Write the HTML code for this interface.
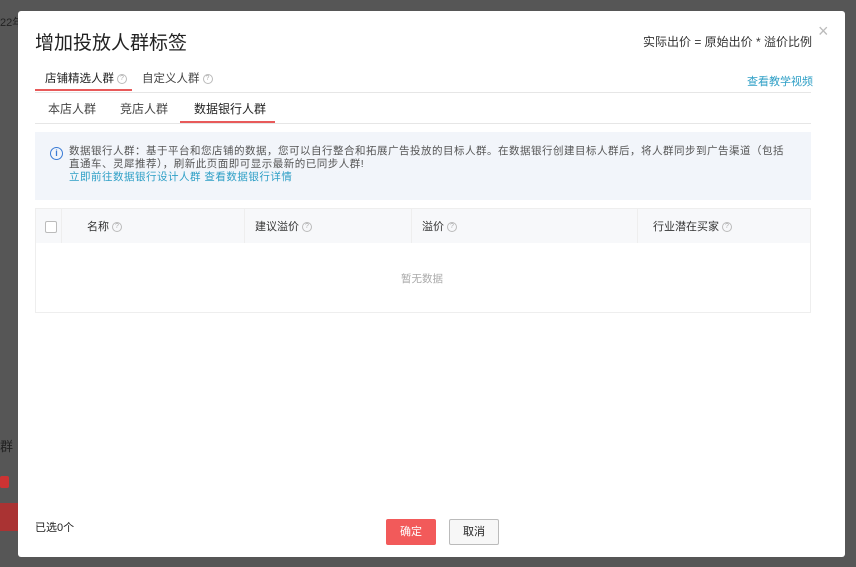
<!DOCTYPE html>
<html><head><meta charset="utf-8"><style>
*{box-sizing:border-box;margin:0;padding:0}
body{width:856px;height:567px;overflow:hidden;background:#565656;font-family:"Liberation Sans","Noto Sans CJK SC",sans-serif;font-size:12px;color:#333;position:relative}
.m{position:absolute;left:18px;top:11px;width:827px;height:546px;background:#fff;border-radius:3px}
.a{position:absolute;white-space:nowrap}
.q{display:inline-block;width:10px;height:10px;border:1px solid #bbb;border-radius:50%;font-size:7px;line-height:8px;text-align:center;color:#aaa;vertical-align:middle;margin-left:3px}
.link{color:#2e9fc6}
</style></head><body>
<div class="a" style="left:0;top:14px;color:#222;font-size:11px">22年</div>
<div class="a" style="left:0;top:436px;color:#222;font-size:13px">群</div>
<div class="a" style="left:0;top:476px;width:9px;height:12px;background:#c33;border-radius:2px"></div>
<div class="a" style="left:0;top:503px;width:18px;height:28px;background:#a33"></div>
<div class="m">
<div class="a" style="left:17px;top:17px;font-size:19px;color:#222">增加投放人群标签</div>
<div class="a" style="left:625px;top:22px;font-size:12px;color:#333">实际出价 = 原始出价 * 溢价比例</div>
<div class="a" style="left:800px;top:10px;font-size:18px;color:#bbb">×</div>
<div class="a" style="left:27px;top:59px;font-size:11.5px;color:#222">店铺精选人群<span class="q">?</span></div>
<div class="a" style="left:17px;top:78px;width:97px;height:2px;background:#e85a5a"></div>
<div class="a" style="left:124px;top:59px;font-size:11.5px;color:#444">自定义人群<span class="q">?</span></div>
<div class="a link" style="left:729px;top:62px;font-size:11px">查看教学视频</div>
<div class="a" style="left:17px;top:81px;width:776px;height:1px;background:#e6e6e6"></div>
<div class="a" style="left:30px;top:89px;font-size:12px;color:#444">本店人群</div>
<div class="a" style="left:102px;top:89px;font-size:12px;color:#444">竞店人群</div>
<div class="a" style="left:176px;top:89px;font-size:12px;color:#222">数据银行人群</div>
<div class="a" style="left:162px;top:110px;width:95px;height:2px;background:#e85a5a"></div>
<div class="a" style="left:17px;top:112px;width:776px;height:1px;background:#e6e6e6"></div>
<div class="a" style="left:17px;top:121px;width:776px;height:68px;background:#f2f5fa"></div>
<div class="a" style="left:32px;top:136px;width:13px;height:13px;border:1.3px solid #3a7bd5;border-radius:50%;color:#3a7bd5;font-size:9px;line-height:10px;text-align:center;font-weight:bold">i</div>
<div class="a" style="left:51px;top:134px;font-size:10.5px;line-height:13px;color:#555;white-space:nowrap;letter-spacing:0.5px">数据银行人群：基于平台和您店铺的数据，您可以自行整合和拓展广告投放的目标人群。在数据银行创建目标人群后，将人群同步到广告渠道（包括<br>直通车、灵犀推荐），刷新此页面即可显示最新的已同步人群!<br><span class="link">立即前往数据银行设计人群 查看数据银行详情</span></div>
<div class="a" style="left:17px;top:197px;width:776px;height:105px;border:1px solid #eee"></div>
<div class="a" style="left:18px;top:198px;width:774px;height:34px;background:#f7f8fa"></div>
<div class="a" style="left:43px;top:198px;width:1px;height:34px;background:#eee"></div>
<div class="a" style="left:226px;top:198px;width:1px;height:34px;background:#eee"></div>
<div class="a" style="left:393px;top:198px;width:1px;height:34px;background:#eee"></div>
<div class="a" style="left:619px;top:198px;width:1px;height:34px;background:#eee"></div>
<div class="a" style="left:27px;top:210px;width:12px;height:12px;border:1px solid #bbb;border-radius:2px;background:#fff"></div>
<div class="a" style="left:69px;top:207px;font-size:11px;color:#333">名称<span class="q">?</span></div>
<div class="a" style="left:237px;top:207px;font-size:11px;color:#333">建议溢价<span class="q">?</span></div>
<div class="a" style="left:404px;top:207px;font-size:11px;color:#333">溢价<span class="q">?</span></div>
<div class="a" style="left:635px;top:207px;font-size:11px;color:#333">行业潜在买家<span class="q">?</span></div>
<div class="a" style="left:383px;top:260px;font-size:10.5px;color:#aaa">暂无数据</div>
<div class="a" style="left:17px;top:508px;font-size:11px;color:#222">已选0个</div>
<div class="a" style="left:368px;top:508px;width:50px;height:26px;background:#f25a5a;border-radius:2px;color:#fff;text-align:center;line-height:26px;font-size:11px">确定</div>
<div class="a" style="left:431px;top:508px;width:50px;height:26px;background:#f7f7f7;border:1px solid #bbb;border-radius:2px;color:#222;text-align:center;line-height:24px;font-size:11px">取消</div>
</div>
</body></html>
